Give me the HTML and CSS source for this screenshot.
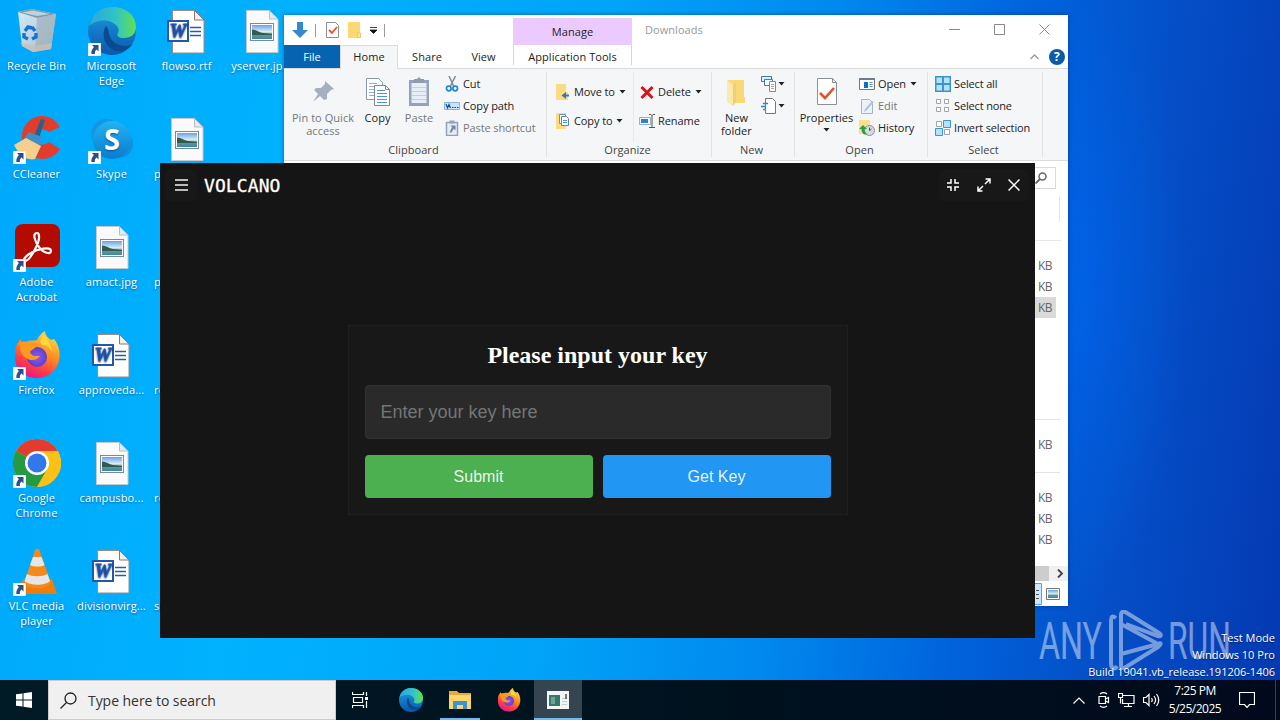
FILE: index.html
```html
<!DOCTYPE html>
<html lang="en">
<head>
    <meta charset="UTF-8">
    <meta name="viewport" content="width=device-width, initial-scale=1.0">
    <title>Desktop</title>
    <link rel="stylesheet" href="styles.css">
</head>
<body>
    <!-- shared icons -->
    <svg class="defs" width="0" height="0">
        <defs>
            <linearGradient id="gEdgeA" x1="0" y1="0" x2="1" y2="0"><stop offset="0" stop-color="#2aa7dc"/><stop offset=".55" stop-color="#2fc3c8"/><stop offset="1" stop-color="#62e04f"/></linearGradient>
            <linearGradient id="gEdgeB" x1="0" y1="0" x2="0" y2="1"><stop offset="0" stop-color="#1b9de2"/><stop offset="1" stop-color="#0b57ad"/></linearGradient>
            <linearGradient id="gFox" x1=".8" y1="0" x2=".3" y2="1"><stop offset="0" stop-color="#ffe14a"/><stop offset=".45" stop-color="#ff8a1e"/><stop offset=".75" stop-color="#ff3b4b"/><stop offset="1" stop-color="#e31587"/></linearGradient>
            <radialGradient id="gFoxC"><stop offset="0" stop-color="#9059ff"/><stop offset="1" stop-color="#5b3fc4"/></radialGradient>
            <linearGradient id="gSkype" x1="0" y1="0" x2="0" y2="1"><stop offset="0" stop-color="#22b4f0"/><stop offset="1" stop-color="#0b7bd0"/></linearGradient>
            <linearGradient id="gPhoto" x1="0" y1="0" x2="0" y2="1"><stop offset="0" stop-color="#6aa2e4"/><stop offset=".5" stop-color="#dff0f8"/><stop offset=".62" stop-color="#6f9c98"/><stop offset="1" stop-color="#3d86a4"/></linearGradient>
            <linearGradient id="gBin" x1="0" y1="0" x2="1" y2="1"><stop offset="0" stop-color="#eef3f6"/><stop offset="1" stop-color="#b4c0c9"/></linearGradient>
            <symbol id="arrow" viewBox="0 0 13 13"><rect width="13" height="13" fill="#fff" stroke="#b9c6d0" stroke-width=".6"/><path d="M4 2h6.500v6.500L8.600 6.600C7 8 6.500 9 7 11H3.500C2.800 8.500 4 6.200 5.900 4z" fill="#2b4f8c"/></symbol>
            <symbol id="bin" viewBox="0 0 48 48"><path d="M5 5l14-3 24 5-5 35-18 3-11-6z" fill="url(#gBin)" opacity=".9"/><path d="M5 5l14-3 24 5-19 4z" fill="#8797a2"/><path d="M9 5.500l11-2 17 3.600-13 2z" fill="#b8d5e4"/><path d="M24 11l19-4-5 35-16 3z" fill="#a3b2bd" opacity=".75"/><path d="M8 36l14 3 17-3-1 6-18 3-11-6z" fill="#cdbdb4" opacity=".8"/><path d="M12 24l3-4 4 1M19 20l3 4M11 26l0 4 4 2M23 26l0 4-4 2" fill="none" stroke="#1574d0" stroke-width="3.400"/></symbol>
            <symbol id="edge" viewBox="0 0 48 48"><circle cx="24" cy="24" r="24" fill="url(#gEdgeB)"/><path d="M1 19C4 5 14 0 25 0c13 0 23 9 23 20 0 7-5 11-12 11-5 0-8-2-6-5 1-2 1-5-2-8-8-8-22-4-27 1z" fill="url(#gEdgeA)"/><path d="M18 19c-5 8-2 19 7 24 7 3 14 1 20-6-7 4-17 2-22-5-3-5-2-11-5-13z" fill="#0b4a91"/></symbol>
            <symbol id="fox" viewBox="0 0 48 48"><path d="M2 18c1-4 3-7 6-10 0 2 0 3 1 4l6-2c2-1 6 0 9-1 2-4 4-7 8-9 0 4 3 7 6 9l3-1c6 7 7 17 4 25-4 9-12 14-21 14C11 47 2 38 2 27z" fill="url(#gFox)"/><circle cx="24" cy="26" r="10" fill="url(#gFoxC)"/><path d="M6 12c4-2 8-2 11 1l6 1c0 4-4 4-6 7 2 5 6 4 10 4-3 5-10 5-14 2C8 24 7 18 6 12z" fill="#ff9a1f"/><path d="M28 14c6-1 11 4 11 9 0-6-2-13-9-19-2 3-3 6-2 10z" fill="#ffd83d"/></symbol>
            <symbol id="word" viewBox="0 0 48 48"><path d="M9.500 3.500h22l9.500 9.500v33H9.500z" fill="#fff" stroke="#9a8a86"/><path d="M31.500 3.500V13H41z" fill="#f3eeee" stroke="#8d7672"/><path d="M27 20.500h11M27 24.500h11M27 28.500h11" stroke="#2b5caa" stroke-width="1.300"/><rect x="5" y="14" width="20" height="20" fill="#fff" stroke="#2456ae" stroke-width="2"/><text x="6.500" y="30" textLength="17" lengthAdjust="spacingAndGlyphs" font-family="Liberation Serif, serif" font-weight="bold" font-style="italic" font-size="19" fill="#2456ae" stroke="#2456ae" stroke-width=".8">W</text></symbol>
            <symbol id="photo" viewBox="0 0 48 48"><path d="M8.500 3.500h23l8.500 8.500v33.500H8.500z" fill="#fafafa" stroke="#c4c9cc"/><path d="M31.500 3.500V12H40z" fill="#e7eaec" stroke="#b7bec3"/><rect x="12.500" y="16.500" width="23" height="17" fill="#fff" stroke="#6f8aa8"/><rect x="14" y="18" width="20" height="14" fill="url(#gPhoto)"/><path d="M14 22.500c4 0 7 3 11 3.500l9 1v1H14z" fill="#315b4b"/></symbol>
            <symbol id="cc" viewBox="0 0 48 48"><path d="M47 12A20 22 0 0 0 29 1C17 1 9 11 9 22s9 22 20 22c8 0 14-4 18-10L36 27c-8 6-15 1-15-5s8-11 15-5z" fill="#e23d2c"/><path d="M28 4l4 1-6 18-5-2z" fill="#22648f"/><path d="M16 17l13 5-3 9-15-7z" fill="#3e8fc4"/><path d="M1 30l12-7 15 8-6 13c-9 2-16-4-21-14z" fill="#f4cf8e"/></symbol>
            <symbol id="skype" viewBox="0 0 48 48"><circle cx="18" cy="19" r="15" fill="#1596e2"/><circle cx="31" cy="29" r="14" fill="#1190e0"/><circle cx="24" cy="25" r="19" fill="url(#gSkype)"/><text x="24" y="35" text-anchor="middle" font-family="Open Sans, sans-serif" font-weight="bold" font-size="29" fill="#fff">S</text></symbol>
            <symbol id="acrobat" viewBox="0 0 48 48"><rect x="2" y="1" width="45" height="43" rx="8" fill="#b30b00"/><path d="M24 10c-5 0-2 9 2 14 4 6 12 8 12 4 0-5-14-2-20 2-6 3-9 8-6 8 5 0 15-19 14-25 0-2-1-3-2-3z" fill="none" stroke="#fff" stroke-width="2.200"/></symbol>
            <symbol id="chrome" viewBox="0 0 48 48"><circle cx="24" cy="24" r="24" fill="#fbc116"/><path d="M24 24L3.200 12A24 24 0 0 1 44.800 12z" fill="#e33b2e"/><path d="M3.200 12A24 24 0 0 0 24 48L34.400 30 24 24z" fill="#269a43"/><path d="M24 12h20.800A24 24 0 0 1 24 48L34.400 30z" fill="#fbc116"/><circle cx="24" cy="24" r="12" fill="#fff"/><circle cx="24" cy="24" r="9.500" fill="#3278ea"/></symbol>
            <symbol id="vlc" viewBox="0 0 48 48"><path d="M10 32h29l5 15H5z" fill="#f07c0a"/><path d="M22.500 2h3.500l12 34c-5 7-21 7-27 0z" fill="#f58a1a"/><path d="M20 10h8.500l3 8c-3 2-11 2-14.500 0zM14 27c5 3 15 3 20.500 0l2.500 7c-5 5-20 5-25.500 0z" fill="#e6e6e6"/></symbol>
            <symbol id="down" viewBox="0 0 7 4"><path d="M.5 0h6L3.500 3.500z" fill="#222"/></symbol>
        </defs>
    </svg>

    <div class="desktop">
        <div class="icons">
            <div class="icon"><svg><use href="#bin"/></svg><span>Recycle Bin</span></div>
            <div class="icon shortcut"><svg><use href="#cc"/></svg><svg class="arrow"><use href="#arrow"/></svg><span>CCleaner</span></div>
            <div class="icon shortcut"><svg><use href="#acrobat"/></svg><svg class="arrow"><use href="#arrow"/></svg><span>Adobe Acrobat</span></div>
            <div class="icon shortcut"><svg><use href="#fox"/></svg><svg class="arrow"><use href="#arrow"/></svg><span>Firefox</span></div>
            <div class="icon shortcut"><svg><use href="#chrome"/></svg><svg class="arrow"><use href="#arrow"/></svg><span>Google Chrome</span></div>
            <div class="icon shortcut"><svg><use href="#vlc"/></svg><svg class="arrow"><use href="#arrow"/></svg><span>VLC media player</span></div>

            <div class="icon shortcut"><svg><use href="#edge"/></svg><svg class="arrow"><use href="#arrow"/></svg><span>Microsoft Edge</span></div>
            <div class="icon shortcut"><svg><use href="#skype"/></svg><svg class="arrow"><use href="#arrow"/></svg><span>Skype</span></div>
            <div class="icon"><svg><use href="#photo"/></svg><span>amact.jpg</span></div>
            <div class="icon"><svg><use href="#word"/></svg><span>approveda...</span></div>
            <div class="icon"><svg><use href="#photo"/></svg><span>campusbo...</span></div>
            <div class="icon"><svg><use href="#word"/></svg><span>divisionvirg...</span></div>

            <div class="icon"><svg><use href="#word"/></svg><span>flowso.rtf</span></div>
            <div class="icon cut"><svg><use href="#photo"/></svg><span>p</span></div>
            <div class="icon cut"><svg></svg><span>p</span></div>
            <div class="icon cut"><svg></svg><span>re</span></div>
            <div class="icon cut"><svg></svg><span>re</span></div>
            <div class="icon cut"><svg></svg><span>sa</span></div>

            <div class="icon"><svg><use href="#photo"/></svg><span>yserver.jp...</span></div>
        </div>

        <!-- file explorer -->
        <div class="explorer">
            <div class="titlebar">
                <div class="quick">
                    <svg width="16" height="17" viewBox="0 0 16 17"><path d="M5 0h6v8h5l-8 8-8-8h5z" fill="#3388d0"/></svg>
                    <i class="sep"></i>
                    <svg width="13" height="16" viewBox="0 0 13 16"><path d="M.5.500h9l3 3v12H.5z" fill="#fff" stroke="#8a8f96"/><path d="M3 8l3 3 5-6" fill="none" stroke="#e0532c" stroke-width="1.800"/></svg>
                    <svg width="13" height="16" viewBox="0 0 13 16"><path d="M0 0h12v11h1v5H0z" fill="#fcd872"/><path d="M9.500 11h3v4.500h-3z" fill="#fbe39b" stroke="#ecc258" stroke-width=".7"/></svg>
                    <svg width="7" height="7" viewBox="0 0 7 7"><path d="M0 .5h7M0 3h7L3.500 6.500z" stroke="#111" fill="#111" stroke-width=".8"/></svg>
                    <i class="sep"></i>
                </div>
                <div class="manage">Manage</div>
                <div class="title">Downloads</div>
                <div class="controls">
                    <svg width="11" height="11" viewBox="0 0 11 11"><path d="M0 5.500h11"/></svg>
                    <svg width="11" height="11" viewBox="0 0 11 11"><path d="M.5.500h10v10H.5z"/></svg>
                    <svg width="11" height="11" viewBox="0 0 11 11"><path d="M.5.500l10 10M10.500.500l-10 10"/></svg>
                </div>
            </div>
            <div class="tabs">
                <div class="tab file">File</div>
                <div class="tab home">Home</div>
                <div class="tab share">Share</div>
                <div class="tab view">View</div>
                <div class="tab tools">Application Tools</div>
                <div class="help">
                    <svg width="9" height="6" viewBox="0 0 9 6"><path d="M.5 5l4-4 4 4" fill="none" stroke="#999" stroke-width="1.300"/></svg>
                    <b>?</b>
                </div>
            </div>
            <div class="ribbon">
                <div class="group clipboard">
                    <div class="tools-row">
                        <div class="big pin off">
                            <svg width="32" height="32" viewBox="0 0 32 32"><path d="M18 5l9 8-3 1-4 4v5l-3 1-4-4-7 6 5-8-4-4 2-2 5 0 4-4z" fill="#a5afbd"/></svg>
                            <span>Pin to Quick access</span>
                        </div>
                        <div class="big copy">
                            <svg width="32" height="32" viewBox="0 0 32 32"><path d="M4.500 2.500h12l4 4v17h-16z" fill="#fff" stroke="#8b98a6"/><path d="M7 7.500h8M7 10.500h8M7 13.500h8M7 16.500h8M7 19.500h8" stroke="#86b4e0"/><path d="M12.500 9.500h11l4 4v16h-15z" fill="#fff" stroke="#7d8a98"/><path d="M23.500 9.500v4h4" fill="none" stroke="#7d8a98"/><path d="M15 14.500h8M15 17.500h10M15 20.500h10M15 23.500h10M15 26.500h10" stroke="#4b94dc"/></svg>
                            <span>Copy</span>
                        </div>
                        <div class="big paste off">
                            <svg width="32" height="32" viewBox="0 0 32 32"><path d="M6 4h20v26H6z" fill="#94a3bb"/><path d="M8.500 7h15v20h-15z" fill="#e8eef8"/><path d="M9 11.500h14M9 15.500h14M9 19.500h14M9 23.500h14" stroke="#c3cfe0"/><path d="M11 3h3l2-2 2 2h3v4H11z" fill="#8f9bab"/></svg>
                            <span>Paste</span>
                        </div>
                        <div class="list">
                            <div class="small"><svg width="16" height="16" viewBox="0 0 16 16"><path d="M5 0l5 11M11.500 0L6 11" stroke="#7e8a96" stroke-width="1.500"/><circle cx="4.800" cy="12.500" r="2.300" fill="none" stroke="#1f86d0" stroke-width="1.700"/><circle cx="11.200" cy="12.500" r="2.300" fill="none" stroke="#1f86d0" stroke-width="1.700"/></svg>Cut</div>
                            <div class="small"><svg width="16" height="16" viewBox="0 0 16 16"><path d="M.5 4.500h15v7H.5z" fill="#c9e4fa" stroke="#86b8e2"/><path d="M2 6l1.500 4L5 6.500 6.500 10M8 9.500h1.500M10.500 9.500H12M13 9.500h1.500" stroke="#1e4f80" fill="none" stroke-width="1.200"/></svg>Copy path</div>
                            <div class="small off"><svg width="16" height="16" viewBox="0 0 16 16"><path d="M2.500 2.500h11v13h-11z" fill="#e6ecf6" stroke="#93a2b8" stroke-width="1.500"/><path d="M5.500.500h5v3h-5z" fill="#93a2b8"/><path d="M6.500 5.500h5v5L9.700 8.800 7.500 12.500H5.500L8 7.200z" fill="#7485a0"/></svg>Paste shortcut</div>
                        </div>
                    </div>
                    <div class="caption">Clipboard</div>
                </div>
                <div class="group organize">
                    <div class="tools-row">
                        <div class="list wide move">
                            <div class="small"><svg width="16" height="16" viewBox="0 0 16 16"><path d="M1 0h10v8h2v8H1z" fill="#fbdc82"/><path d="M14 10.500H11V8L6.500 11.500 11 15v-2.500h3z" fill="#2b7cc4"/></svg>Move to<svg class="caret"><use href="#down"/></svg></div>
                            <div class="small"><svg width="16" height="16" viewBox="0 0 16 16"><path d="M1 0h10v16H1z" fill="#fbdc82"/><path d="M4.500 1.500h6v9h-6z" fill="#fff" stroke="#6e8fb6"/><path d="M6.500 3.500h5l2 2v7h-7z" fill="#fff" stroke="#5c82b2"/><path d="M8 7.500h4M8 9.500h4" stroke="#4b94dc"/></svg>Copy to<svg class="caret"><use href="#down"/></svg></div>
                        </div>
                        <div class="list wide del">
                            <div class="small"><svg width="16" height="16" viewBox="0 0 16 16"><path d="M2.500 3l11 11M13.500 3l-11 11" stroke="#d8121a" stroke-width="3"/></svg>Delete<svg class="caret"><use href="#down"/></svg></div>
                            <div class="small"><svg width="16" height="16" viewBox="0 0 16 16"><path d="M.5 4.500h11v7H.5z" fill="#fff" stroke="#8fb2d2"/><path d="M2 6h7v4H2z" fill="#2b83cb"/><path d="M10 1.500h2l1 1 1-1h2M13 2v12M10 14.500h6" fill="none" stroke="#555"/></svg>Rename</div>
                        </div>
                    </div>
                    <div class="caption">Organize</div>
                </div>
                <div class="group new">
                    <div class="tools-row">
                        <div class="big folder">
                            <svg width="32" height="32" viewBox="0 0 32 32"><path d="M7 4h16v17h1v6H9z" fill="#f9d878"/><path d="M6 4l6 5v21l-6-4z" fill="#fde9ab"/><path d="M12 9l3-3v20l-3 4z" fill="#f3cd70"/></svg>
                            <span>New folder</span>
                        </div>
                        <div class="list">
                            <div class="small"><svg width="16" height="16" viewBox="0 0 16 16"><path d="M.5.500h10v5H.5z" fill="#d8ecfa" stroke="#3b7fae"/><path d="M3.500 3.500h8v6h-8z" fill="#fff" stroke="#3b7fae"/><path d="M8.500 5.500h6v10h-6z" fill="#fff" stroke="#888"/><path d="M10 8.500h3M10 10.500h3M10 12.500h3" stroke="#aaa"/></svg><svg class="caret"><use href="#down"/></svg></div>
                            <div class="small"><svg width="16" height="16" viewBox="0 0 16 16"><path d="M4.500.500h7l3 3v12h-10z" fill="#fff" stroke="#777"/><path d="M2 5.500h5M0 8.500h5M2 11.500h3" stroke="#2b83cb" stroke-width="1.300"/></svg><svg class="caret"><use href="#down"/></svg></div>
                        </div>
                    </div>
                    <div class="caption">New</div>
                </div>
                <div class="group open">
                    <div class="tools-row">
                        <div class="big props">
                            <svg width="32" height="32" viewBox="0 0 32 32"><path d="M6.500 2.500h15l4 4v22h-19z" fill="#fff" stroke="#8b9096"/><path d="M21.500 2.500v4h4" fill="none" stroke="#8b9096"/><path d="M9 17l5 5 9-10" fill="none" stroke="#e0532c" stroke-width="2.600"/></svg>
                            <span>Properties</span>
                            <svg class="caret"><use href="#down"/></svg>
                        </div>
                        <div class="list">
                            <div class="small"><svg width="16" height="16" viewBox="0 0 16 16"><path d="M.5 2.500h15v11H.5z" fill="#fff" stroke="#777"/><path d="M.5 3h15" stroke="#6c7c8c" stroke-width="2"/><path d="M5 6h4v6H5z" fill="#0c70c4"/><path d="M10.500 6.500h3M10.500 8.500h3M10.500 10.500h3" stroke="#4b94dc"/></svg>Open<svg class="caret"><use href="#down"/></svg></div>
                            <div class="small off"><svg width="16" height="16" viewBox="0 0 16 16"><path d="M2.500 1.500h8l3 3v11h-11z" fill="#edf1f9" stroke="#a3b1cb"/><path d="M15 4l-8 9-2 1 1-3 7-8z" fill="#b5c2dc"/></svg>Edit</div>
                            <div class="small"><svg width="16" height="16" viewBox="0 0 16 16"><path d="M0 0h11v14H0z" fill="#fbe08b"/><circle cx="10.500" cy="10.500" r="5" fill="#d5dade" stroke="#88929a"/><path d="M10.500 7.500v3l2-1.500" fill="none" stroke="#555"/><path d="M0 9l4-4 4 4H5.500c0 3 1 4 3 5.500C4 15.500 2.500 12 2.500 9z" fill="#2e9f3e"/></svg>History</div>
                        </div>
                    </div>
                    <div class="caption">Open</div>
                </div>
                <div class="group select">
                    <div class="tools-row">
                        <div class="list">
                            <div class="small"><svg width="16" height="16" viewBox="0 0 16 16"><path d="M0 0h16v16H0z" fill="#3a95d4"/><path d="M1.500 1.500H7V7H1.500zM9 1.500h5.500V7H9zM1.500 9H7v5.500H1.500zM9 9h5.500v5.500H9z" fill="#b9e0fa"/></svg>Select all</div>
                            <div class="small"><svg width="16" height="16" viewBox="0 0 16 16"><path d="M1.500 1.500h4v4h-4zM9.500 1.500h4v4h-4zM1.500 9.500h4v4h-4zM9.500 9.500h4v4h-4z" fill="#fff" stroke="#a0a4a8"/></svg>Select none</div>
                            <div class="small"><svg width="16" height="16" viewBox="0 0 16 16"><path d="M1.500 1.500h5v5h-5zM9.500 9.500h5v5h-5z" fill="#fff" stroke="#a0a4a8"/><path d="M8.500.500h7v7h-7zM.5 8.500h7v7h-7z" fill="#b9e0fa" stroke="#3a95d4"/></svg>Invert selection</div>
                        </div>
                    </div>
                    <div class="caption">Select</div>
                </div>
            </div>
            <div class="content">
                <div class="search-end"><svg width="12" height="12" viewBox="0 0 12 12"><circle cx="7.500" cy="4.500" r="3.500" fill="none" stroke="#666" stroke-width="1.500"/><path d="M5 7L.5 11.500" stroke="#666" stroke-width="1.800"/></svg></div>
                <div class="column-end"></div>
                <div class="sizes first">
                    <div>KB</div>
                    <div>KB</div>
                    <div class="selected">KB</div>
                </div>
                <div class="sizes second"><div>KB</div></div>
                <div class="sizes third">
                    <div>KB</div>
                    <div>KB</div>
                    <div>KB</div>
                </div>
                <div class="scrollbar"><i></i><svg width="7" height="9" viewBox="0 0 7 9"><path d="M1 .5l4 4-4 4" fill="none" stroke="#444" stroke-width="1.900"/></svg></div>
                <div class="modes">
                    <svg class="details" width="7" height="22" viewBox="0 0 7 22"><path d="M0 .5h6.500v21H0" fill="#cce8ff" stroke="#4ba6dc"/><path d="M1 7.500h3M1 11.500h3M1 15.500h3" stroke="#555"/></svg>
                    <svg width="14" height="12" viewBox="0 0 14 12"><path d="M.5.500h13v11H.5z" fill="#fff" stroke="#777"/><path d="M2 2h10v8H2z" fill="url(#gPhoto)"/></svg>
                </div>
            </div>
        </div>

        <!-- watermark -->
        <svg class="watermark" width="194" height="62" viewBox="0 0 194 62">
            <g font-family="Roboto, sans-serif" font-size="51" font-weight="400">
                <text x="0" y="49" textLength="63" lengthAdjust="spacingAndGlyphs">ANY</text>
                <text x="129" y="49" textLength="63" lengthAdjust="spacingAndGlyphs">RUN</text>
            </g>
            <path d="M77 8c-4-3-5-1-5 3v42c0 6 4 7 6 3M82 44V5c0-4 3-4 6-2l32 20c3 2 2 4-1 3L87 14M82 44l37-10c4-2 3 1 0 3L87 57c-3 2-5 1-5-2zM82 44V14l37 20" fill="none" stroke="#fff" stroke-width="4"/>
        </svg>
        <div class="build">
            <p>Test Mode</p>
            <p>Windows 10 Pro</p>
            <p>Build 19041.vb_release.191206-1406</p>
        </div>

        <!-- key window -->
        <div class="volcano">
            <div class="bar">
                <div class="menu"><i></i><i></i><i></i></div>
                <h1>VOLCANO</h1>
                <div class="buttons">
                    <svg width="12" height="12" viewBox="0 0 12 12"><path d="M4 0v4H0M8 0v4h4M4 12V8H0M8 12V8h4"/></svg>
                    <svg width="14" height="14" viewBox="0 0 14 14"><path d="M8 6l5-5M8.500 1H13v4.500M6 8l-5 5M1 8.500V13h4.500"/></svg>
                    <svg width="12" height="12" viewBox="0 0 12 12"><path d="M.5.500l11 11M11.500.500l-11 11"/></svg>
                </div>
            </div>
            <div class="key-box">
                <h2>Please input your key</h2>
                <input type="text" placeholder="Enter your key here">
                <div class="actions">
                    <button class="btn submit">Submit</button>
                    <button class="btn get">Get Key</button>
                </div>
            </div>
        </div>
    </div>

    <div class="taskbar">
        <div class="start"><svg width="16" height="16" viewBox="0 0 16 16"><path d="M0 2.300l6.500-.9v6.100H0zM7.500 1.200L16 0v7.500H7.500zM0 8.500h6.500v6.100L0 13.700zM7.500 8.500H16V16l-8.500-1.200z" fill="#fff"/></svg></div>
        <div class="search"><svg width="17" height="17" viewBox="0 0 17 17"><circle cx="10.500" cy="6.500" r="5.500" fill="none" stroke="#222" stroke-width="1.300"/><path d="M6.500 10.500L.5 16.500" stroke="#222" stroke-width="1.300"/></svg>Type here to search</div>
        <div class="apps">
            <div class="app taskview"><svg width="17" height="16" viewBox="0 0 17 16"><path d="M.5 0v2.500h11V0M.5 16v-2.500h11V16M1.500 5.500h9v5h-9zM14.500 0v4M14.500 9v7" fill="none" stroke="#fff" stroke-width="1.200"/><path d="M13 5h3v3h-3z" fill="#fff"/></svg></div>
            <div class="app"><svg width="24" height="24"><use href="#edge"/></svg></div>
            <div class="app running"><svg width="22" height="20" viewBox="0 0 22 20"><path d="M0 1h8l2 2h12v16H0z" fill="#e9a93a"/><path d="M0 5h22v14H0z" fill="#fcd667"/><path d="M4 11h14v8h-4v-4H8v4H4z" fill="#3f93d4"/></svg></div>
            <div class="app"><svg width="24" height="24"><use href="#fox"/></svg></div>
            <div class="app running active"><svg width="22" height="18" viewBox="0 0 22 18"><path d="M0 0h22v18H0z" fill="#f4f6f6"/><path d="M2 4h11v11H2z" fill="#37786e"/><path d="M4 6h4v7H4z" fill="#6da498"/><path d="M15 7.500h5M15 10.500h5M15 13.500h5" stroke="#c3cccc"/><path d="M19 3v5" stroke="#333" stroke-width="1.300"/></svg></div>
        </div>
        <div class="tray">
            <svg width="12" height="7" viewBox="0 0 12 7"><path d="M.5 6.500L6 1l5.500 5.500"/></svg>
            <svg width="12" height="16" viewBox="0 0 12 16"><path d="M1 4.500h6.500v7H1zM7.500 7l3-1.500v5l-3-1.500M2 2c2-1.500 5-1.500 7 0M2 14c2 1.500 5 1.500 7 0"/></svg>
            <svg width="17" height="14" viewBox="0 0 17 14"><path d="M5 2.500h11v8H4.500V6M.5.500h4v4h-4zM2.500 5v5.500M10.500 10.500v3M6 13.500h8"/></svg>
            <svg width="17" height="14" viewBox="0 0 17 14"><path d="M.5 4.500h2.500l3-3v11l-3-3H.5zM8.500 5c1 1.300 1 2.700 0 4M11 3c2 2.500 2 5.500 0 8M13.500 1c3 4 3 8 0 12"/></svg>
            <div class="clock"><div>7:25 PM</div><div>5/25/2025</div></div>
            <svg class="notify" width="16" height="16" viewBox="0 0 16 16"><path d="M.5.500h15v12h-5L8 15.500 5.500 12.500h-5z"/></svg>
        </div>
    </div>
</body>
</html>
```
FILE: styles.css
```css
* {
    margin: 0;
    padding: 0;
    box-sizing: border-box;
}

body {
    width: 1280px;
    height: 720px;
    overflow: hidden;
    font-family: 'Open Sans', 'Noto Sans', sans-serif;
    font-size: 11px;
    color: #222;
    display: flex;
    flex-direction: column;
}

svg {
    display: block;
    flex: none;
}

.defs {
    position: absolute;
}

.desktop {
    position: relative;
    height: 680px;
    background:
        radial-gradient(ellipse 130px 330px at 1060px 290px, rgba(0, 105, 245, 0.6), rgba(0, 80, 220, 0)),
        linear-gradient(97deg, #00a8fb 0%, #00b2ff 22%, #00a4f8 45%, #0088ee 62%, #0062dc 76%, #0450c8 86%, #0439b2 100%);
}

/* desktop icons */
.icons {
    display: grid;
    grid-template-rows: repeat(6, 108px);
    grid-auto-flow: column;
    grid-auto-columns: 75px;
    margin-left: -1px;
}

.icon {
    position: relative;
    padding-top: 7px;
    display: flex;
    flex-direction: column;
    align-items: center;
    color: #fff;
    text-align: center;
    line-height: 15px;
    letter-spacing: 0.15px;
    text-shadow: 0 1px 2px rgba(0, 40, 90, 0.6);
}

.icon svg {
    width: 48px;
    height: 48px;
    margin-bottom: 3px;
}

.icon span {
    width: 73px;
}

.icon .arrow {
    position: absolute;
    left: 14px;
    top: 43px;
    width: 13px;
    height: 13px;
}

.icon.cut span {
    text-align: left;
    padding-left: 4px;
}

/* explorer */
.explorer {
    position: absolute;
    left: 284px;
    top: 15px;
    width: 784px;
    height: 591px;
    background: #fff;
    display: flex;
    flex-direction: column;
    box-shadow: 0 0 4px rgba(0, 20, 80, 0.5);
    letter-spacing: 0.05px;
}

.titlebar {
    display: flex;
    height: 30px;
}

.quick {
    width: 229px;
    display: flex;
    align-items: center;
    padding-left: 8px;
    gap: 9px;
}

.quick .sep {
    width: 1px;
    height: 13px;
    background: #999;
    margin: 0 1px 0 -2px;
}

.manage {
    width: 119px;
    margin-top: 3px;
    background: #ebcbff;
    text-align: center;
    line-height: 28px;
}

.title {
    padding-left: 13px;
    line-height: 30px;
    color: #999;
    font-size: 11px;
}

.controls {
    margin-left: auto;
    display: flex;
    align-items: center;
    gap: 34px;
    padding-right: 18px;
    margin-top: -1px;
}

.controls path {
    fill: none;
    stroke: #888;
}

.tabs {
    display: flex;
    height: 24px;
    line-height: 24px;
    text-align: center;
    border-bottom: 1px solid #dadbdc;
}

.tab.file {
    width: 56px;
    background: #0563b1;
    color: #fff;
}

.tab.home {
    width: 58px;
    height: 24px;
    background: #f5f6f7;
    border: 1px solid #dadbdc;
    border-bottom: none;
    line-height: 22px;
}

.tab.share {
    width: 58px;
}

.tab.view {
    width: 57px;
    padding-right: 2px;
}

.tab.tools {
    width: 119px;
    border-left: 1px solid #dcd2e4;
    border-right: 1px solid #dcd2e4;
    height: 20px;
}

.help {
    margin-left: auto;
    display: flex;
    align-items: center;
    gap: 10px;
    padding-right: 3px;
}

.help b {
    width: 16px;
    height: 16px;
    border-radius: 50%;
    background: #0a5cab;
    color: #fff;
    font-size: 12px;
    line-height: 16px;
}

.ribbon {
    display: flex;
    height: 92px;
    background: #f5f6f7;
    border-bottom: 1px solid #dadbdc;
}

.group {
    display: flex;
    flex-direction: column;
    margin: 3px 0;
    border-right: 1px solid #e2e3e4;
}

.group.clipboard { width: 263px; }
.group.organize { width: 165px; }
.group.new { width: 83px; }
.group.open { width: 133px; }
.group.select { width: 115px; }

.tools-row {
    display: flex;
    height: 72px;
}

.caption {
    text-align: center;
    line-height: 15px;
    padding-right: 3px;
    color: #444;
}

.big {
    display: flex;
    flex-direction: column;
    align-items: center;
    text-align: center;
    line-height: 13px;
    padding-top: 4px;
}

.big span {
    margin-top: 3px;
}

.big .caret {
    margin: 4px 0 0;
}

.off {
    color: #777;
}

.pin { width: 78px; }
.pin span { width: 66px; }
.copy { width: 31px; }
.paste { width: 52px; }
.folder { width: 49px; }
.props { width: 63px; }

.list {
    display: flex;
    flex-direction: column;
    padding-top: 1px;
}

.list.wide {
    gap: 7px;
    padding-top: 9px;
}

.small {
    display: flex;
    align-items: center;
    height: 22px;
    gap: 3px;
    line-height: 22px;
    white-space: nowrap;
}

.caret {
    width: 7px;
    height: 4px;
    margin-left: 1px;
}

.clipboard .list { margin-left: -1px; }
.clipboard .small { letter-spacing: -0.1px; }
.move { padding-left: 8px; width: 86px; letter-spacing: -0.1px; }
.del { padding-left: 5px; border-left: 1px solid #e8e9ea; letter-spacing: -0.05px; }
.new .small { gap: 0; }
.open .list { padding-left: 1px; letter-spacing: -0.05px; }
.select .list { padding-left: 7px; letter-spacing: -0.15px; }

.content {
    flex: 1;
    display: flex;
    flex-direction: column;
    align-items: flex-end;
    color: #666;
}

.search-end {
    margin: 6px 12px 0 0;
    width: 40px;
    height: 22px;
    border: 1px solid #d9d9d9;
    display: flex;
    align-items: center;
    padding-left: 18px;
}

.column-end {
    width: 50px;
    height: 52px;
    margin-right: 7px;
    border-bottom: 1px solid #e3e6ee;
    background: linear-gradient(#dbe6f2, #dbe6f2) no-repeat 48px 8px / 1px 25px;
}

.sizes {
    width: 50px;
    margin-right: 12px;
    line-height: 21px;
    letter-spacing: -0.5px;
}

.sizes div {
    padding-left: 32px;
    font-size: 12px;
}

.sizes .selected {
    background: #d9d9d9;
}

.first { margin-top: 14px; }
.second {
    margin-top: 101px;
    padding: 14px 0 17px;
    margin-right: 8px;
    width: 54px;
    border-top: 1px solid #e4e4e4;
    border-bottom: 1px solid #e4e4e4;
}
.third { margin-top: 14px; }

.scrollbar {
    margin-top: auto;
    width: 54px;
    height: 15px;
    background: #f0f0f0;
    display: flex;
    align-items: center;
    gap: 8px;
}

.scrollbar i {
    width: 35px;
    height: 15px;
    background: #cdcdcd;
}

.modes {
    display: flex;
    align-items: center;
    height: 25px;
    gap: 4px;
    padding-right: 8px;
}

/* watermark */
.build {
    position: absolute;
    right: 5px;
    bottom: 0;
    color: #fff;
    text-align: right;
    font-size: 11px;
    line-height: 17px;
    text-shadow: 0 1px 1px rgba(0, 0, 0, 0.5);
}

.watermark {
    position: absolute;
    left: 1039px;
    top: 610px;
    fill: #fff;
    opacity: 0.45;
}

/* key window */
.volcano {
    position: absolute;
    left: 160px;
    top: 163px;
    width: 875px;
    height: 475px;
    background: #151515;
    display: flex;
    flex-direction: column;
    align-items: center;
}

.bar {
    width: 100%;
    height: 44px;
    display: flex;
    align-items: center;
    padding: 0 6px 0 5px;
}

.menu {
    width: 32px;
    height: 32px;
    border-radius: 5px;
    background: #181818;
    display: flex;
    flex-direction: column;
    align-items: center;
    justify-content: center;
    gap: 3px;
}

.menu i {
    width: 13px;
    height: 2px;
    background: #bbb;
}

.bar h1 {
    font: 18px 'DejaVu Sans Mono', monospace;
    -webkit-text-stroke: 0.3px #fff;
    color: #fff;
    margin-left: 7px;
    padding-top: 1px;
    letter-spacing: 0.1px;
}

.buttons {
    margin-left: auto;
    width: 90px;
    height: 32px;
    border-radius: 5px;
    background: #181818;
    display: flex;
    align-items: center;
    justify-content: space-between;
    padding: 0 9px 0 8px;
}

.buttons path {
    fill: none;
    stroke: #fff;
    stroke-width: 1.5;
}

.key-box {
    width: 500px;
    height: 190px;
    margin-top: 118px;
    padding: 15px 16px 16px;
    background: #181818;
    border: 1px solid #1f1f1f;
}

.key-box h2 {
    font: bold 24px 'Liberation Serif', serif;
    line-height: 28px;
    color: #fff;
    text-align: center;
}

.key-box input {
    display: block;
    width: 466px;
    height: 54px;
    margin-top: 16px;
    padding: 0 15px;
    background: #2a2a2a;
    border: 1px solid #333;
    border-radius: 4px;
    font: 18px 'Liberation Sans', sans-serif;
}

.key-box input::placeholder {
    color: #757575;
}

.actions {
    display: flex;
    gap: 10px;
    margin-top: 16px;
}

.btn {
    flex: 1;
    height: 43px;
    border: none;
    border-radius: 4px;
    color: rgba(255, 255, 255, 0.9);
    font: 16px 'Liberation Sans', sans-serif;
}

.submit { background: #4caf50; }
.get { background: #2196f3; }

/* taskbar */
.taskbar {
    display: flex;
    height: 40px;
    background: linear-gradient(90deg, #001a26, #00131f 50%, #000a1c);
    color: #fff;
}

.start {
    width: 48px;
    display: flex;
    align-items: center;
    justify-content: center;
}

.search {
    width: 288px;
    background: #f0f0f0;
    border: 1px solid #ccc;
    display: flex;
    align-items: center;
    gap: 11px;
    padding-left: 11px;
    color: #333;
    font-size: 14px;
    letter-spacing: -0.05px;
}

.apps {
    display: flex;
    gap: 1px;
}

.app {
    width: 48px;
    display: flex;
    align-items: center;
    justify-content: center;
}

.taskview {
    margin-right: 2px;
}

.running {
    background: linear-gradient(#76b9ed, #76b9ed) no-repeat 50% 100% / 40px 2px;
}

.running.active {
    background: linear-gradient(#76b9ed, #76b9ed) no-repeat 50% 100% / 48px 2px, #34454f;
}

.tray {
    margin-left: auto;
    display: flex;
    align-items: center;
    gap: 8px;
    padding-right: 4px;
    border-right: 1px solid #33405a;
    margin-right: 4px;
}

.tray svg {
    fill: none;
    stroke: #fff;
    stroke-width: 1.2;
}

.tray svg:first-child {
    margin-right: 5px;
}

.clock {
    width: 54px;
    text-align: center;
    line-height: 18px;
    white-space: nowrap;
    font-size: 12px;
    letter-spacing: -0.5px;
}

.notify {
    margin: 0 16px 0 9px;
}
```
